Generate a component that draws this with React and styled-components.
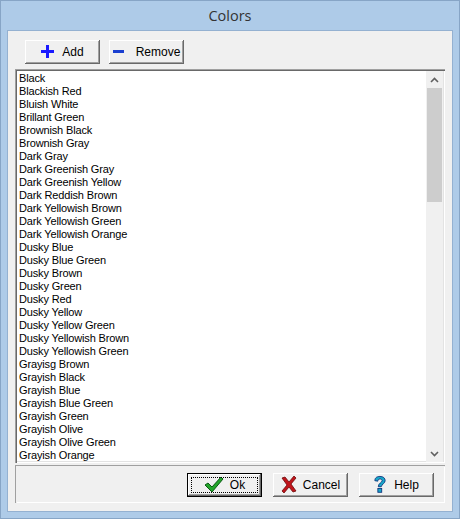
import React from 'react'
import styled, { createGlobalStyle } from 'styled-components'

const GlobalStyle = createGlobalStyle`
  html, body { margin: 0; padding: 0; background: #aecbe8; }
  body { font-family: "Liberation Sans", Arial, sans-serif; }
`

const colors = [
  'Black', 'Blackish Red', 'Bluish White', 'Brillant Green', 'Brownish Black',
  'Brownish Gray', 'Dark Gray', 'Dark Greenish Gray', 'Dark Greenish Yellow',
  'Dark Reddish Brown', 'Dark Yellowish Brown', 'Dark Yellowish Green',
  'Dark Yellowish Orange', 'Dusky Blue', 'Dusky Blue Green', 'Dusky Brown',
  'Dusky Green', 'Dusky Red', 'Dusky Yellow', 'Dusky Yellow Green',
  'Dusky Yellowish Brown', 'Dusky Yellowish Green', 'Grayisg Brown',
  'Grayish Black', 'Grayish Blue', 'Grayish Blue Green', 'Grayish Green',
  'Grayish Olive', 'Grayish Olive Green', 'Grayish Orange',
]

const Window = styled.div`
  width: 460px;
  height: 519px;
  box-sizing: border-box;
  background: #aecbe8;
  border: 1px solid #87a5c6;
  display: flex;
  flex-direction: column;
`

const TitleBar = styled.div`
  height: 29px;
  display: flex;
  align-items: center;
  justify-content: center;
  font-family: "Open Sans", "Noto Sans", sans-serif;
  font-size: 14.5px;
  color: #333;
  box-sizing: border-box;
`

const Client = styled.div`
  flex: 1;
  margin: 0 6px 6px 6px;
  background: #f0f0f0;
  border: 1px solid #94b1d1;
  display: flex;
  flex-direction: column;
  padding: 9px 7px 8px 7px;
`

const Toolbar = styled.div`
  display: flex;
  gap: 9px;
  padding-left: 10px;
  height: 24px;
  margin-bottom: 5px;
`

const Button = styled.button`
  width: ${p => p.$w || 75}px;
  height: 24px;
  box-sizing: border-box;
  border: none;
  background: #f0f0f0;
  box-shadow: inset -1px -1px #696969, inset 1px 1px #ffffff,
    inset -2px -2px #a0a0a0, inset 2px 2px #f0f0f0;
  display: flex;
  align-items: center;
  justify-content: center;
  gap: ${p => p.$gap || 6}px;
  font-family: "Liberation Sans", Arial, sans-serif;
  font-size: 12px;
  color: #000;
  padding: 0 0 1px 0;
  position: relative;
`

const DefaultButton = styled(Button)`
  box-shadow: inset 0 0 0 1px #000, inset -2px -2px #696969, inset 2px 2px #ffffff,
    inset -3px -3px #a0a0a0;
  &::after {
    content: '';
    position: absolute;
    inset: 4px;
    border: 1px dotted #000;
  }
`

const ListBox = styled.div`
  height: 394px;
  box-sizing: border-box;
  background: #fff;
  display: flex;
  box-shadow: inset 1px 1px #a0a0a0, inset 2px 2px #696969,
    inset -1px -1px #ffffff, inset -2px -2px #e3e3e3;
  padding: 2px 2px 1px 2px;
`

const Items = styled.ul`
  flex: 1;
  list-style: none;
  margin: 0;
  padding: 1px 0 0 2px;
  overflow: hidden;
`

const Item = styled.li`
  height: 13px;
  line-height: 13px;
  font-family: "Liberation Sans", Arial, sans-serif;
  font-size: 11px;
  letter-spacing: -0.15px;
  color: #000;
  white-space: nowrap;
`

const ScrollBar = styled.div`
  width: 17px;
  background: #f0f0f0;
  display: flex;
  flex-direction: column;
`

const Arrow = styled.div`
  height: 17px;
  display: flex;
  align-items: center;
  justify-content: center;
`

const Track = styled.div`
  flex: 1;
  display: flex;
  flex-direction: column;
`

const Thumb = styled.div`
  height: 114px;
  margin: 0 1px;
  background: #cdcdcd;
`

const Footer = styled.div`
  margin-top: 2px;
  flex: 1;
  box-sizing: border-box;
  box-shadow: inset 1px 1px #a0a0a0, inset 2px 2px #f0f0f0,
    inset -1px -1px #ffffff, inset -2px -2px #f0f0f0;
  display: flex;
  justify-content: flex-end;
  align-items: flex-start;
  gap: 11px;
  padding: 8px 11px 0 0;
`

const Plus = () => (
  <svg width="13" height="13" viewBox="0 0 13 13">
    <rect x="5" y="0" width="3" height="13" fill="#1a1aff" />
    <rect x="0" y="5" width="13" height="3" fill="#1a1aff" />
  </svg>
)

const Minus = () => (
  <svg width="11" height="4" viewBox="0 0 11 4">
    <rect x="0" y="0" width="11" height="3" fill="#1a3fd0" />
  </svg>
)

const Check = () => (
  <svg width="20" height="18" viewBox="0 0 20 18">
    <path d="M1 9 L4 7 L8 11 L17 1 L19 3 L8 16 Z" fill="#22a52a" stroke="#0a5a12" strokeWidth="1" />
  </svg>
)

const Cross = () => (
  <svg width="16" height="17" viewBox="0 0 16 17">
    <path d="M1 2 L4 1 L8 6 L13 0 L15 2 L10 8 L15 15 L12 16 L8 11 L3 17 L1 15 L6 9 Z" fill="#c0141b" stroke="#6d0a0a" strokeWidth="0.8" />
  </svg>
)

const Question = () => (
  <svg width="12" height="20" viewBox="0 0 14 20">
    <path d="M1 5 C1 1 4 0 7 0 C11 0 13 2 13 5 C13 8 9 9 8.5 12 L5 12 C5 8 9.5 7 9.5 5 C9.5 3.5 8 3 7 3 C5.5 3 4.5 4 4.5 5.5 Z" fill="#18a7c9" stroke="#0a2f7a" strokeWidth="1" />
    <rect x="4.5" y="14" width="4.5" height="4.5" fill="#18a7c9" stroke="#0a2f7a" strokeWidth="1" />
  </svg>
)

const Chevron = ({ up }) => (
  <svg width="9" height="6" viewBox="0 0 9 6">
    <path d={up ? 'M1 5 L4.5 1.5 L8 5' : 'M1 1 L4.5 4.5 L8 1'} fill="none" stroke="#606060" strokeWidth="1.6" />
  </svg>
)

export default function App() {
  return (
    <>
      <GlobalStyle />
      <Window>
        <TitleBar>Colors</TitleBar>
        <Client>
          <Toolbar>
            <Button $gap={8}><Plus />Add</Button>
            <Button $gap={12}><Minus />Remove</Button>
          </Toolbar>
          <ListBox>
            <Items>
              {colors.map(c => <Item key={c}>{c}</Item>)}
            </Items>
            <ScrollBar>
              <Arrow><Chevron up /></Arrow>
              <Track><Thumb /></Track>
              <Arrow><Chevron /></Arrow>
            </ScrollBar>
          </ListBox>
          <Footer>
            <DefaultButton $gap={6}><Check />Ok</DefaultButton>
            <Button $gap={6}><Cross />Cancel</Button>
            <Button $gap={8}><Question />Help</Button>
          </Footer>
        </Client>
      </Window>
    </>
  )
}
